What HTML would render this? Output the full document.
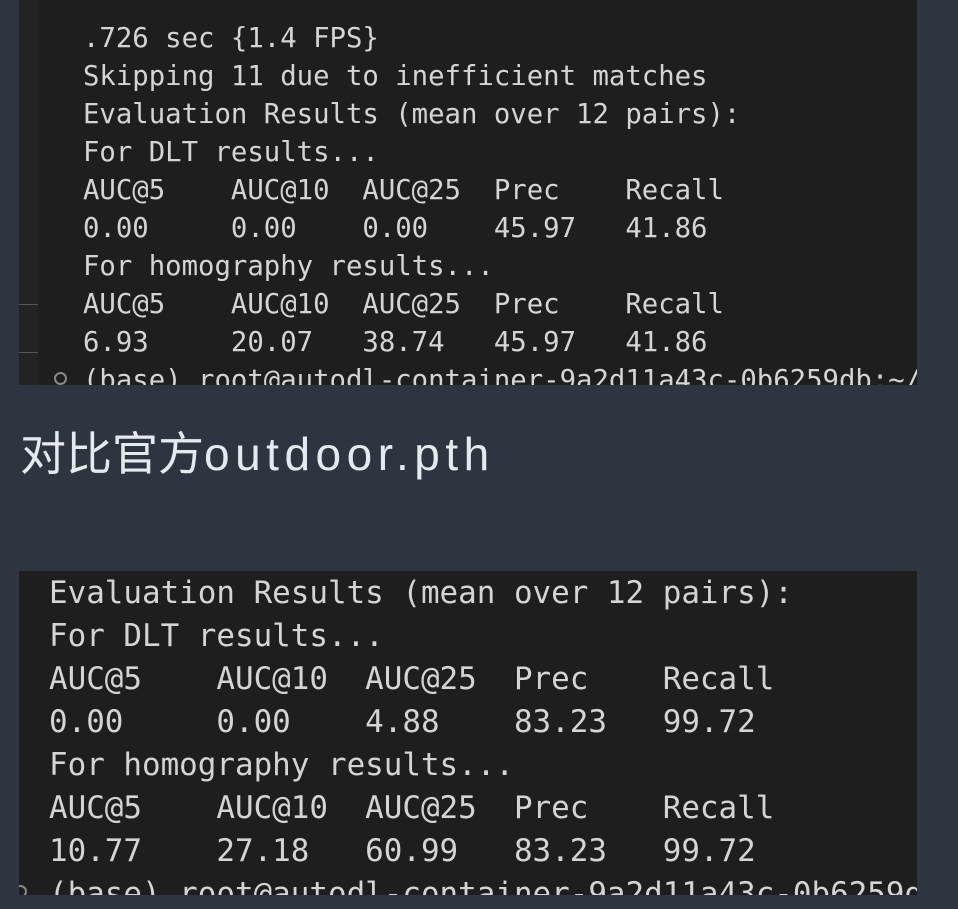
<!DOCTYPE html>
<html><head><meta charset="utf-8"><style>
html,body{margin:0;padding:0;background:#2e3440;width:958px;height:909px;overflow:hidden;position:relative}
.term{position:absolute;left:19px;width:898px;background:#1e1e1e;overflow:hidden}
pre{margin:0;position:absolute;color:#d4d4d4;white-space:pre;font-family:"DejaVu Sans Mono",monospace}
#t1{top:0;height:385px}
#t1 pre{left:64px;top:20px;font-size:27.3px;line-height:38px;letter-spacing:0px}
#t2{top:571px;height:324px}
#t2 pre{left:30px;top:1px;font-size:30.9px;line-height:43px}
.gut{position:absolute;left:0;top:0;width:19px;height:385px;background:#232323}
.gl{position:absolute;left:0;width:19px;height:1px;background:#555}
.circ{position:absolute;width:9px;height:9px;border:2px solid #888;border-radius:50%}
h1{position:absolute;left:20px;top:424px;margin:0;font-weight:normal;font-size:46px;line-height:60px;color:#e5e9f0;font-family:"Liberation Sans","Noto Sans CJK SC",sans-serif}
h1 span{letter-spacing:5.5px}
</style></head><body>
<div class="term" id="t1">
<div class="gut"></div><div class="gl" style="top:304px"></div><div class="gl" style="top:352px"></div>
<div class="circ" style="left:35px;top:372px"></div>
<pre>.726 sec {1.4 FPS}
Skipping 11 due to inefficient matches
Evaluation Results (mean over 12 pairs):
For DLT results...
AUC@5    AUC@10  AUC@25  Prec    Recall
0.00     0.00    0.00    45.97   41.86
For homography results...
AUC@5    AUC@10  AUC@25  Prec    Recall
6.93     20.07   38.74   45.97   41.86
(base) root@autodl-container-9a2d11a43c-0b6259db:~/</pre>
</div>
<h1>对比官方<span>outdoor.pth</span></h1>
<div class="term" id="t2">
<div class="circ" style="left:-5px;top:314px"></div>
<pre>Evaluation Results (mean over 12 pairs):
For DLT results...
AUC@5    AUC@10  AUC@25  Prec    Recall
0.00     0.00    4.88    83.23   99.72
For homography results...
AUC@5    AUC@10  AUC@25  Prec    Recall
10.77    27.18   60.99   83.23   99.72
(base) root@autodl-container-9a2d11a43c-0b6259db:~/</pre>
</div>
</body></html>
